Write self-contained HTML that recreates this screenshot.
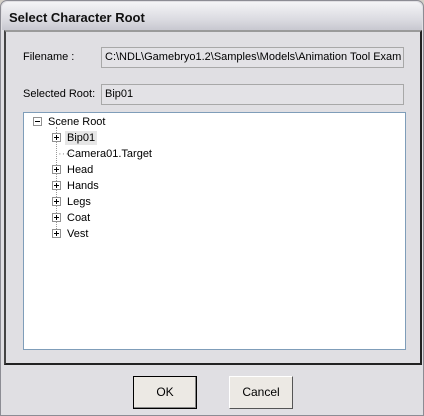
<!DOCTYPE html>
<html><head><style>
*{margin:0;padding:0;box-sizing:border-box}
body{width:424px;height:416px;overflow:hidden;background:#d4d0c8;font-family:"Liberation Sans",sans-serif;font-size:11px;color:#000;position:relative}
.win{position:absolute;left:0;top:0;width:424px;height:416px;background:#e0dfe3;border:1px solid #8c8c94;border-radius:7px 7px 0 0}
.title{position:absolute;left:1px;top:1px;width:420px;height:28px;background:linear-gradient(#f4f4f6,#dcdce2 60%,#c8c8d0);border-radius:6px 6px 0 0;font-weight:bold;font-size:13px;padding:8px 0 0 7px;color:#111}
.panel{position:absolute;left:3px;top:29px;width:418px;height:335px;border:2px solid;border-color:#9a9a9a #222 #222 #444;background:#e0dfe3}
.lbl{position:absolute}
.tb{position:absolute;left:100px;width:303px;height:21px;border:1px solid #a8a8a8;background:#e3e2e6;padding:3px 0 0 3px;white-space:nowrap;overflow:hidden}
.tree{position:absolute;left:22px;top:111px;width:383px;height:238px;background:#fff;border:1px solid #7f9db9}
.row{position:absolute;height:14px;line-height:14px}
.bx{position:absolute;width:9px;height:9px;border:1px solid #919191;background:#fff}
.bx:before{content:"";position:absolute;left:1px;top:3px;width:5px;height:1px;background:#000}
.p:after{content:"";position:absolute;left:3px;top:1px;width:1px;height:5px;background:#000}
.btn{position:absolute;top:375px;width:64px;height:33px;background:#ece9e4;border:1px solid;border-color:#fff #555 #555 #fff;text-align:center;line-height:31px;font-size:12px}
.vl{position:absolute;left:55px;top:126px;height:110px;border-left:1px dotted #999}
</style></head><body>
<div class="win">
<div class="title">Select Character Root</div>
<div class="panel"></div>
<div class="lbl" style="left:22px;top:50px">Filename :</div>
<div class="tb" style="top:46px">C:\NDL\Gamebryo1.2\Samples\Models\Animation Tool Exam</div>
<div class="lbl" style="left:22px;top:87px">Selected Root:</div>
<div class="tb" style="top:83px">Bip01</div>
<div class="tree">
</div>
<div class="vl"></div>
<div class="bx" style="left:32px;top:116px"></div>
<div class="row" style="left:47px;top:114px">Scene Root</div>
<div class="bx p" style="left:51px;top:132px"></div><div class="row" style="left:64px;top:130px;background:#e6e6e6;padding:0 2px">Bip01</div>
<div class="row" style="left:57px;top:146px;color:#999">····</div><div class="row" style="left:66px;top:146px">Camera01.Target</div>
<div class="bx p" style="left:51px;top:164px"></div><div class="row" style="left:66px;top:162px">Head</div>
<div class="bx p" style="left:51px;top:180px"></div><div class="row" style="left:66px;top:178px">Hands</div>
<div class="bx p" style="left:51px;top:196px"></div><div class="row" style="left:66px;top:194px">Legs</div>
<div class="bx p" style="left:51px;top:212px"></div><div class="row" style="left:66px;top:210px">Coat</div>
<div class="bx p" style="left:51px;top:228px"></div><div class="row" style="left:66px;top:226px">Vest</div>
<div class="btn" style="left:132px;border:1px solid #000;box-shadow:inset -1px -1px #888">OK</div>
<div class="btn" style="left:228px">Cancel</div>
</div>
</body></html>
